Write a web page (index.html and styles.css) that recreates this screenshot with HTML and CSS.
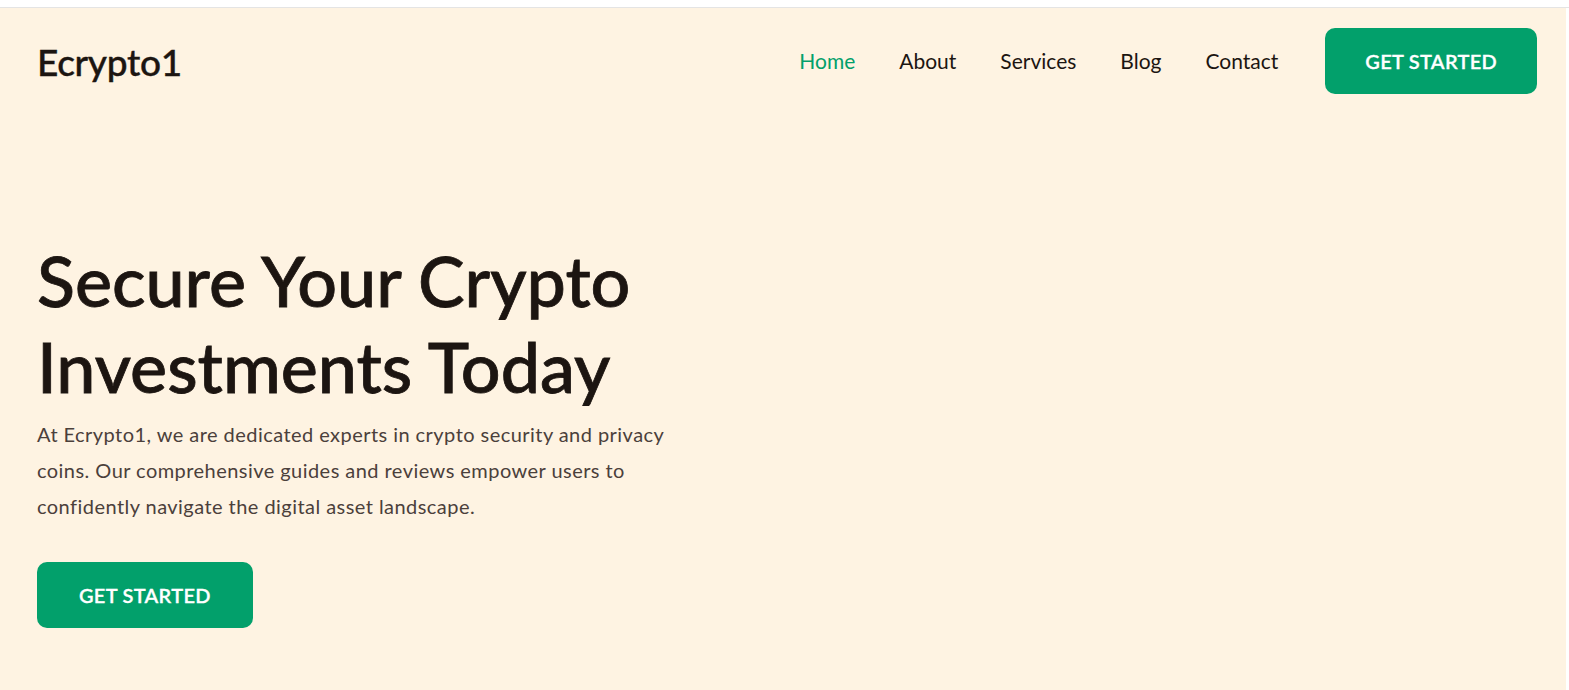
FILE: index.html
```html
<!DOCTYPE html>
<html lang="en">
<head>
    <meta charset="utf-8" />
    <title>Ecrypto1</title>
    <link rel="stylesheet" href="styles.css">
</head>
<body>
<div class="topbar"></div>
<div class="page">
    <header class="header">
        <a class="logo" href="#">Ecrypto1</a>
        <nav class="nav">
            <a class="nav-link active" href="#">Home</a>
            <a class="nav-link" href="#">About</a>
            <a class="nav-link" href="#">Services</a>
            <a class="nav-link" href="#">Blog</a>
            <a class="nav-link" href="#">Contact</a>
            <a class="btn" href="#">GET STARTED</a>
        </nav>
    </header>
    <section class="hero">
        <h1>Secure Your Crypto<br>Investments Today</h1>
        <p>At Ecrypto1, we are dedicated experts in crypto security and privacy coins. Our comprehensive guides and reviews empower users to confidently navigate the digital asset landscape.</p>
        <a class="btn btn-lg" href="#">GET STARTED</a>
    </section>
</div>
</body>
</html>
```

FILE: styles.css
```css
* {
    padding: 0;
    margin: 0;
    box-sizing: border-box;
}
body {
    font-family: Lato, "Noto Sans", sans-serif;
    background: #fff;
    color: #1c1511;
}
a {
    text-decoration: none;
    color: inherit;
}
.topbar {
    height: 8px;
    border-bottom: 1px solid #e4e4e4;
}
.page {
    background: #fef3e2;
    height: 682px;
    margin-right: 3px;
}
.header {
    display: flex;
    justify-content: space-between;
    align-items: center;
    padding: 20px 29px 0 37px;
}
.logo {
    font-size: 37px;
    font-weight: 500;
    letter-spacing: -0.3px;
    -webkit-text-stroke: 0.4px #1c1511;
}
.nav {
    display: flex;
    align-items: center;
    gap: 44px;
}
.nav-link {
    font-size: 21px;
    margin-top: -2px;
}
.nav-link.active {
    color: #02a06b;
}
.btn {
    display: inline-block;
    background: #02a06b;
    color: #fff;
    font-size: 20px;
    font-weight: 600;
    letter-spacing: 0.3px;
    line-height: 66px;
    padding: 0 40px;
    border-radius: 10px;
    -webkit-text-stroke: 0.3px #fff;
}
.nav .btn {
    margin-left: 3px;
}
.btn-lg {
    padding: 0 42px;
}
.hero {
    padding: 143px 37px 0;
}
.hero h1 {
    font-size: 70px;
    font-weight: 500;
    line-height: 86px;
    color: #1c1511;
    -webkit-text-stroke: 0.8px #1c1511;
}
.hero p {
    max-width: 650px;
    font-size: 20px;
    letter-spacing: 0.45px;
    line-height: 36px;
    color: #4b403b;
    margin-top: 7px;
}
.hero .btn {
    margin-top: 38px;
}
```
